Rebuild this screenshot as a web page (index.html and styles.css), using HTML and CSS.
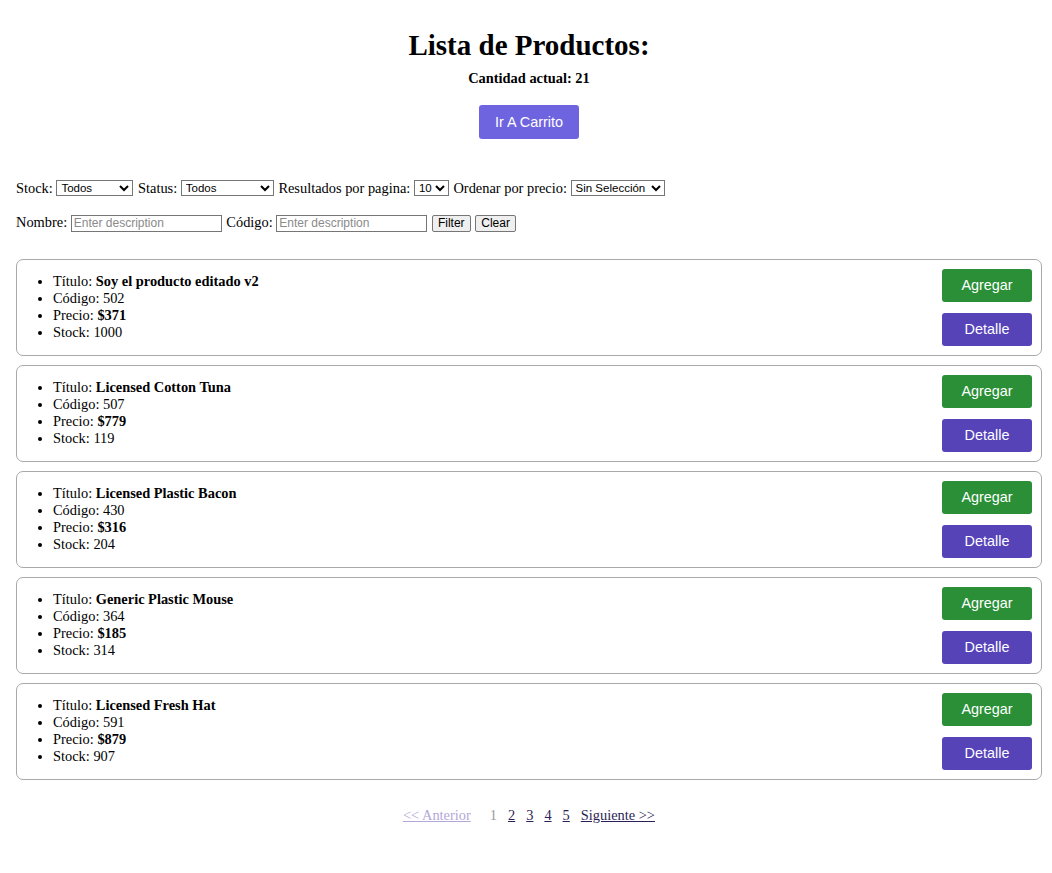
FILE: index.html
```html
<!DOCTYPE html>
<html lang="es">
<head>
<meta charset="utf-8">
<title>Lista de Productos</title>
<link rel="stylesheet" href="styles.css">
</head>
<body>
<div class="page">
  <header class="header">
    <h1 class="title">Lista de Productos:</h1>
    <h4 class="count">Cantidad actual: 21</h4>
    <button class="cart-btn" type="button">Ir A Carrito</button>
  </header>

  <section class="filters">
    <p class="filter-row">Stock: <select class="sel sel-stock"><option>Todos</option></select> Status: <select class="sel sel-status"><option>Todos</option></select> Resultados por pagina: <select class="sel sel-limit"><option>10</option></select> Ordenar por precio: <select class="sel sel-sort"><option>Sin Selección</option></select></p>
    <p class="filter-row">Nombre: <input class="txt" type="text" placeholder="Enter description"> Código: <input class="txt" type="text" placeholder="Enter description"> <button class="small-btn" type="button">Filter</button> <button class="small-btn" type="button">Clear</button></p>
  </section>

  <main class="products">
    <div class="card">
      <ul class="info">
        <li>Título: <b>Soy el producto editado v2</b></li>
        <li>Código: 502</li>
        <li>Precio: <b>$371</b></li>
        <li>Stock: 1000</li>
      </ul>
      <div class="actions">
        <button class="btn btn-add" type="button">Agregar</button>
        <button class="btn btn-detail" type="button">Detalle</button>
      </div>
    </div>
    <div class="card">
      <ul class="info">
        <li>Título: <b>Licensed Cotton Tuna</b></li>
        <li>Código: 507</li>
        <li>Precio: <b>$779</b></li>
        <li>Stock: 119</li>
      </ul>
      <div class="actions">
        <button class="btn btn-add" type="button">Agregar</button>
        <button class="btn btn-detail" type="button">Detalle</button>
      </div>
    </div>
    <div class="card">
      <ul class="info">
        <li>Título: <b>Licensed Plastic Bacon</b></li>
        <li>Código: 430</li>
        <li>Precio: <b>$316</b></li>
        <li>Stock: 204</li>
      </ul>
      <div class="actions">
        <button class="btn btn-add" type="button">Agregar</button>
        <button class="btn btn-detail" type="button">Detalle</button>
      </div>
    </div>
    <div class="card">
      <ul class="info">
        <li>Título: <b>Generic Plastic Mouse</b></li>
        <li>Código: 364</li>
        <li>Precio: <b>$185</b></li>
        <li>Stock: 314</li>
      </ul>
      <div class="actions">
        <button class="btn btn-add" type="button">Agregar</button>
        <button class="btn btn-detail" type="button">Detalle</button>
      </div>
    </div>
    <div class="card">
      <ul class="info">
        <li>Título: <b>Licensed Fresh Hat</b></li>
        <li>Código: 591</li>
        <li>Precio: <b>$879</b></li>
        <li>Stock: 907</li>
      </ul>
      <div class="actions">
        <button class="btn btn-add" type="button">Agregar</button>
        <button class="btn btn-detail" type="button">Detalle</button>
      </div>
    </div>
  </main>

  <nav class="pagination">
    <a class="page-link disabled" href="#">&lt;&lt; Anterior</a>
    <span class="page-current">1</span>
    <a class="page-link" href="#">2</a>
    <a class="page-link" href="#">3</a>
    <a class="page-link" href="#">4</a>
    <a class="page-link" href="#">5</a>
    <a class="page-link" href="#">Siguiente &gt;&gt;</a>
  </nav>
</div>
</body>
</html>
```

FILE: styles.css
```css
html, body {
  margin: 0;
  padding: 0;
  background: #ffffff;
}

body {
  font-family: "Liberation Serif", "Times New Roman", serif;
  font-size: 14.4px;
  line-height: 17px;
  color: #000;
}

.page {
  padding: 28px 10px 0 16px;
}

.header {
  display: flex;
  flex-direction: column;
  align-items: center;
}

.title {
  margin: 0;
  font-size: 29px;
  line-height: 34px;
  font-weight: bold;
}

.count {
  margin: 8px 0 0 0;
  font-size: 14.4px;
  line-height: 17px;
  font-weight: bold;
}

.cart-btn {
  margin-top: 18px;
  width: 100px;
  height: 34px;
  border: none;
  border-radius: 3px;
  background: #6f64e0;
  color: #fff;
  font-family: "Liberation Sans", Arial, sans-serif;
  font-size: 14.4px;
  padding: 0;
}

.filters {
  margin-top: 40px;
}

.filter-row {
  margin: 0 0 16px 0;
  line-height: 18px;
}

.sel {
  font-family: "Liberation Sans", Arial, sans-serif;
  font-size: 11.5px;
  height: 16px;
  padding: 0;
  margin: 0 1px 0 0;
  border: 1px solid #767676;
  border-radius: 0;
  background: #fff;
  color: #000;
  vertical-align: 1px;
}

.sel-stock { width: 77px; }
.sel-status { width: 93px; }
.sel-limit { width: 35px; }
.sel-sort { width: 94px; }

.txt {
  font-family: "Liberation Sans", Arial, sans-serif;
  font-size: 12px;
  width: 151px;
  height: 17px;
  box-sizing: border-box;
  padding: 0 2px;
  margin: 0 1px 0 0;
  border: 1px solid #767676;
  border-radius: 0;
}

.txt::placeholder {
  color: #8a8a8a;
}

.small-btn {
  font-family: "Liberation Sans", Arial, sans-serif;
  font-size: 12px;
  height: 17px;
  box-sizing: border-box;
  padding: 0 5px;
  margin: 0 1px 0 0;
  border: 1px solid #767676;
  border-radius: 2px;
  background: #efefef;
  color: #000;
  line-height: 14px;
}

.products {
  margin-top: 27px;
  display: flex;
  flex-direction: column;
  gap: 9px;
}

.card {
  display: flex;
  justify-content: space-between;
  align-items: center;
  border: 1px solid #a9a9a9;
  border-radius: 7px;
  padding: 9px 9px 9px 0;
}

.info {
  margin: 0;
  padding-left: 36px;
  list-style: disc;
}

.info li {
  line-height: 17px;
}

.actions {
  display: flex;
  flex-direction: column;
  gap: 11px;
}

.btn {
  width: 90px;
  height: 33px;
  border: none;
  border-radius: 3px;
  color: #fff;
  font-family: "Liberation Sans", Arial, sans-serif;
  font-size: 14.4px;
  padding: 0;
}

.btn-add {
  background: #2b8f37;
}

.btn-detail {
  background: #5643b8;
}

.pagination {
  display: flex;
  justify-content: center;
  gap: 11px;
  margin-top: 27px;
  line-height: 17px;
}

.page-link {
  color: #2c1f57;
  text-decoration: underline;
}

.page-link.disabled {
  color: #b3a7d8;
  margin-right: 8px;
}

.page-current {
  color: #9a9a9a;
}
```
